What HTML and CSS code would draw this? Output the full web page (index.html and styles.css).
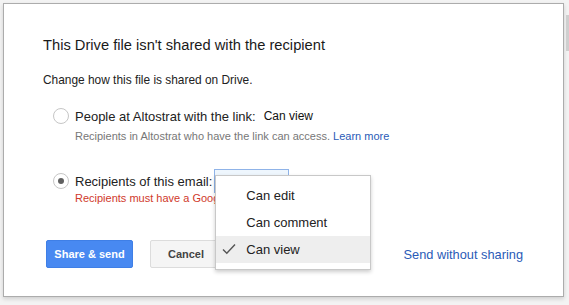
FILE: index.html
```html
<!DOCTYPE html>
<html lang="en">
<head>
    <meta charset="UTF-8">
    <title>Share dialog</title>
    <link rel="stylesheet" href="styles.css">
</head>
<body>

    <div class="scroll_thumb"></div>

    <div class="dialog">
        <h1 class="dialog_title">This Drive file isn't shared with the recipient</h1>
        <p class="dialog_sub">Change how this file is shared on Drive.</p>

        <div class="option">
            <div class="option_row">
                <span class="radio"></span>
                <span class="option_label">People at Altostrat with the link:</span>
                <span class="option_value">Can view</span>
            </div>
            <p class="hint">Recipients in Altostrat who have the link can access. <a class="learn" href="#">Learn more</a></p>
        </div>

        <div class="option option_two">
            <div class="option_row">
                <span class="radio checked"></span>
                <span class="option_label">Recipients of this email:</span>
                <span class="select_box">
                    <ul class="menu">
                        <li class="menu_item">Can edit</li>
                        <li class="menu_item">Can comment</li>
                        <li class="menu_item selected">
                            <svg class="tick" width="14" height="12" viewBox="0 0 14 12">
                                <path d="M1 6.5 L4.8 10.2 L13 1.5" fill="none" stroke="#555" stroke-width="1.4"/>
                            </svg>
                            Can view
                        </li>
                    </ul>
                </span>
            </div>
            <p class="error">Recipients must have a Google Account to view the file.</p>
        </div>

        <div class="dialog_footer">
            <button class="btn btn_send">Share &amp; send</button>
            <button class="btn btn_cancel">Cancel</button>
            <a class="send_plain" href="#">Send without sharing</a>
        </div>
    </div>

</body>
</html>
```

FILE: styles.css
```css
body {
    margin: 0;
    padding: 3px 5px 6px 3px;
    background-color: #f3f3f3;
    font-family: "Liberation Sans", Arial, sans-serif;
    color: #222;
}

.scroll_thumb {
    position: absolute;
    right: 0;
    top: 15px;
    width: 3px;
    height: 36px;
    background-color: #cfcfcf;
}

.dialog {
    height: 294px;
    box-sizing: border-box;
    background-color: #fff;
    border: 1px solid #acacac;
    box-shadow: 0 2px 4px rgba(0, 0, 0, 0.15);
    padding: 31px 40px 0 39px;
}

.dialog_title {
    margin: 0;
    font-size: 14.7px;
    line-height: 20px;
    font-weight: normal;
    color: #1a1a1a;
}

.dialog_sub {
    margin: 17px 0 0 0;
    font-size: 11.9px;
    line-height: 16px;
}

.option {
    margin: 19px 0 0 10px;
}

.option_two {
    margin-top: 29px;
}

.option_row {
    display: flex;
    align-items: center;
    height: 18px;
    font-size: 13px;
}

.radio {
    width: 14px;
    height: 14px;
    border: 1px solid #c6c6c6;
    border-radius: 50%;
    margin-right: 6px;
    display: flex;
    align-items: center;
    justify-content: center;
    background-color: #fff;
}

.radio.checked::after {
    content: "";
    width: 6px;
    height: 6px;
    border-radius: 50%;
    background-color: #606060;
}

.option_value {
    margin-left: 8px;
    font-size: 12px;
    color: #111;
}

.hint {
    margin: 4px 0 0 22px;
    font-size: 11px;
    line-height: 14px;
    color: #777;
}

.learn {
    color: #2a5bb7;
    text-decoration: none;
}

.error {
    margin: 1px 0 0 22px;
    width: 140px;
    overflow: hidden;
    white-space: nowrap;
    font-size: 11px;
    line-height: 14px;
    color: #d0392b;
}

.select_box {
    position: relative;
    top: 0;
    margin-left: 2px;
    width: 73px;
    height: 22px;
    border: 1px solid #8fb3e8;
    background-color: #eef6fd;
}

.menu {
    position: absolute;
    left: 0;
    top: 5px;
    width: 154px;
    margin: 0;
    padding: 6px 0;
    list-style: none;
    background-color: #fff;
    border: 1px solid #c8c8c8;
    box-shadow: 0 2px 4px rgba(0, 0, 0, 0.2);
    z-index: 2;
}

.menu_item {
    height: 27px;
    line-height: 27px;
    padding-left: 30px;
    font-size: 13px;
    color: #222;
    position: relative;
}

.menu_item.selected {
    background-color: #eeeeee;
}

.tick {
    position: absolute;
    left: 6px;
    top: 7px;
}

.dialog_footer {
    display: flex;
    align-items: center;
    margin: 35px 0 0 3px;
}

.btn {
    height: 28px;
    border-radius: 2px;
    font-family: inherit;
    font-size: 11px;
    font-weight: bold;
    padding: 0;
    cursor: pointer;
}

.btn_send {
    width: 87px;
    background-color: #4889f1;
    border: 1px solid #3f7fe6;
    color: #fff;
}

.btn_cancel {
    width: 72px;
    margin-left: 17px;
    background-color: #f5f5f5;
    border: 1px solid #dcdcdc;
    color: #444;
}

.send_plain {
    margin-left: auto;
    font-size: 12.8px;
    color: #2a5bb7;
    text-decoration: none;
}
```
